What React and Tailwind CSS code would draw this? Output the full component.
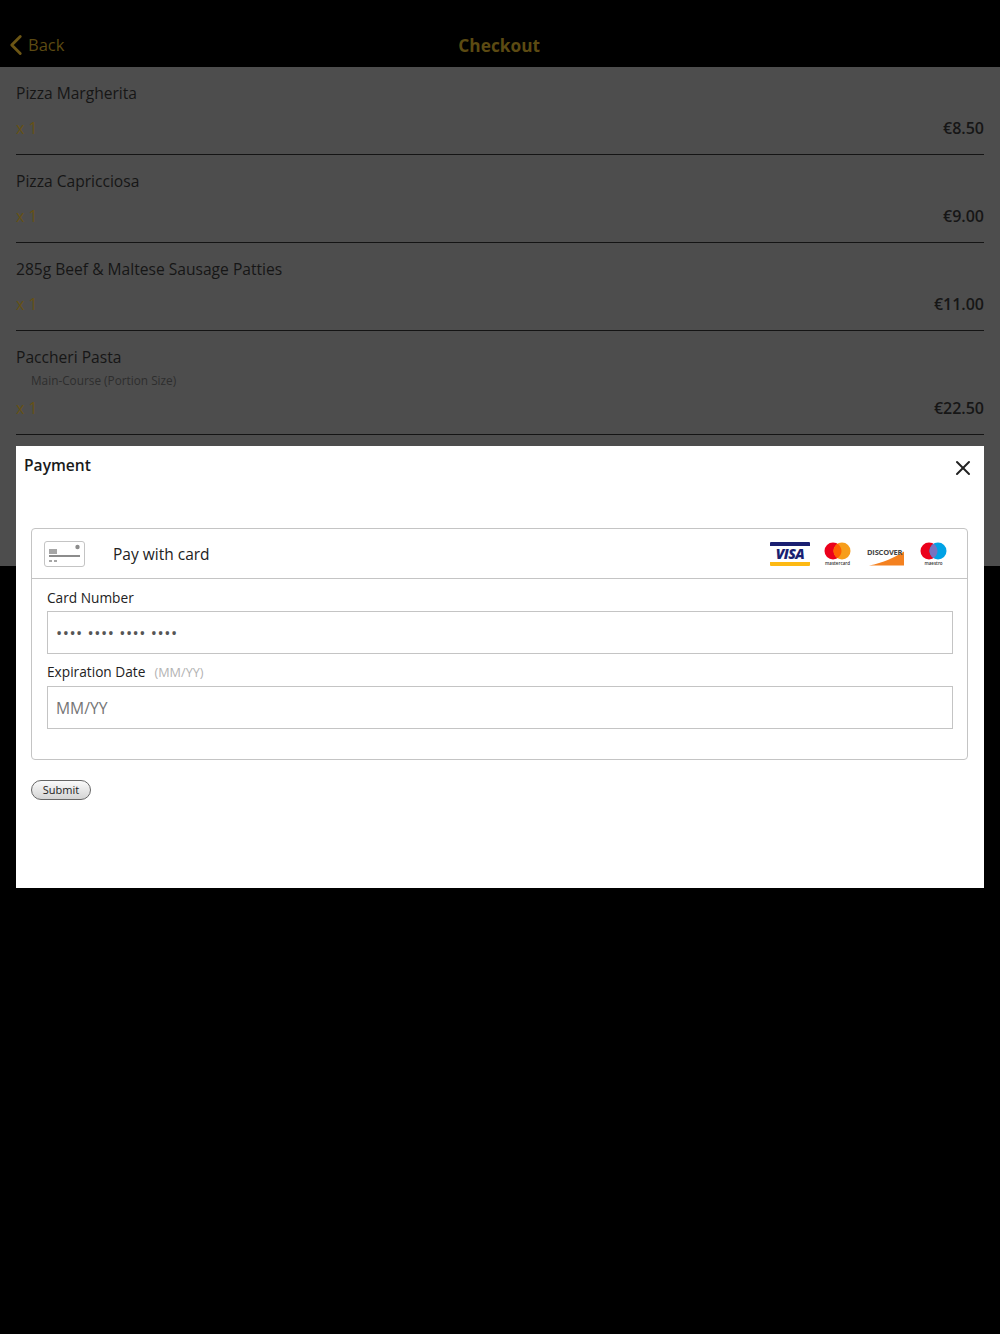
import React from 'react';
import { ChevronLeft, X } from 'lucide-react';

const items = [
  { name: 'Pizza Margherita', price: '€8.50' },
  { name: 'Pizza Capricciosa', price: '€9.00' },
  { name: '285g Beef & Maltese Sausage Patties', price: '€11.00' },
  { name: 'Paccheri Pasta', note: 'Main-Course (Portion Size)', price: '€22.50' },
];

const CardIcon = () => (
  <svg width="42" height="26" viewBox="0 0 42 26" fill="none">
    <rect x="0.5" y="0.5" width="40" height="25" rx="2.5" fill="#fff" stroke="#c4c4c4" />
    <rect x="5" y="8" width="8" height="5" fill="#a6a6a6" />
    <rect x="5" y="14" width="31" height="2" fill="#8c8c8c" />
    <circle cx="33.5" cy="6" r="2.2" fill="#8c8c8c" />
    <rect x="5" y="19" width="3" height="2" fill="#a6a6a6" />
    <rect x="10" y="19" width="3" height="2" fill="#a6a6a6" />
  </svg>
);

const VisaLogo = () => (
  <div className="flex flex-col w-[40px] h-[24px]">
    <div className="h-[4px] bg-[#1a1f71] rounded-t-[1px]" />
    <div className="flex-1 flex items-center justify-center text-[14px] tracking-[-0.6px] leading-none font-extrabold italic text-[#1a1f71]">VISA</div>
    <div className="h-[4px] bg-[#fdb913] rounded-b-[1px]" />
  </div>
);

const McLogo = () => (
  <div className="flex flex-col items-center w-[27px] mt-px -ml-px mr-px">
    <svg width="27" height="18" viewBox="0 0 27 18">
      <circle cx="9" cy="9" r="8.5" fill="#eb001b" />
      <circle cx="18" cy="9" r="8.5" fill="#f79e1b" />
      <path d="M13.5 1.8a8.5 8.5 0 0 1 0 14.4a8.5 8.5 0 0 1 0-14.4z" fill="#ff5f00" />
    </svg>
    <span className="text-[4.5px] leading-[6px] font-semibold text-[#333]">mastercard</span>
  </div>
);

const DiscoverLogo = () => (
  <div className="relative w-[38px] h-[24px]">
    <svg className="absolute left-0 top-0" width="38" height="24" viewBox="0 0 38 24">
      <path d="M2 23.5C16 21 28 15 37 9.5V23.5z" fill="#f48120" />
    </svg>
    <span className="absolute left-0 top-[6px] text-[7.5px] leading-[9px] font-bold tracking-[-0.2px] text-[#444]">DISCOVER</span>
  </div>
);

const MaestroLogo = () => (
  <div className="flex flex-col items-center w-[27px] mt-px">
    <svg width="27" height="18" viewBox="0 0 27 18">
      <circle cx="9" cy="9" r="8.5" fill="#eb001b" />
      <circle cx="18" cy="9" r="8.5" fill="#00a2e5" />
      <path d="M13.5 1.8a8.5 8.5 0 0 1 0 14.4a8.5 8.5 0 0 1 0-14.4z" fill="#7673c0" />
    </svg>
    <span className="text-[4.5px] leading-[6px] font-semibold text-[#333]">maestro</span>
  </div>
);

export default function App() {
  return (
    <div className="relative min-h-[1334px] bg-black font-['Open_Sans',sans-serif]">
      {/* Header */}
      <div className="h-[67px] flex items-end pb-[10px] relative">
        <div className="flex items-center text-[16.5px] leading-[24px] text-[#5c4a12]">
          <ChevronLeft size={34} strokeWidth={2} className="text-[#6b5514] -my-[5px] -ml-[1px]" />
          <span className="ml-[-5px]">Back</span>
        </div>
        <div className="flex-1 text-center text-[17.3px] leading-[22px] font-bold text-[#5c4a12] pr-[66px]">Checkout</div>
      </div>

      {/* Order list */}
      <div className="h-[499px] bg-[#4d4d4d] px-4 overflow-hidden">
        {items.map((item) => (
          <div key={item.name} className="border-b border-[#141414] pt-[14px] pb-[14px]">
            <div className="text-[15.6px] leading-[24px] text-[#161616]">{item.name}</div>
            {item.note && (
              <div className="text-[11.8px] leading-[16px] text-[#2e2e2e] pl-[15px] mt-[3px] -mb-[3px]">{item.note}</div>
            )}
            <div className="flex justify-between items-center mt-[11px] text-[16px] leading-[24px]">
              <span className="text-[#665214]">x 1</span>
              <span className="font-semibold text-[#161616]">{item.price}</span>
            </div>
          </div>
        ))}
      </div>

      {/* Payment modal */}
      <div className="absolute left-4 top-[446px] w-[968px] h-[442px] bg-white">
        <div className="flex justify-between items-start pl-2 pr-[9px] pt-[7px]">
          <span className="text-[15.6px] leading-[24px] font-semibold text-[#1a1a1a]">Payment</span>
          <X size={24} strokeWidth={2} className="text-[#222] mt-[3px]" />
        </div>

        <div className="ml-[15px] mr-[16px] mt-[48px] h-[232px] border border-[#c4c4c4] rounded-[4px]">
          <div className="h-[50px] flex items-center border-b border-[#c4c4c4] pl-3 pr-5">
            <CardIcon />
            <span className="ml-[27px] pt-[2px] text-[15.5px] text-[#222]">Pay with card</span>
            <div className="ml-auto flex items-center gap-[15px]">
              <VisaLogo />
              <McLogo />
              <DiscoverLogo />
              <MaestroLogo />
            </div>
          </div>

          <div className="pl-[15px] pr-[14px]">
            <label className="block mt-[9px] mb-[4px] text-[13.7px] leading-[19px] text-[#222]">Card Number</label>
            <div className="h-[43px] border border-[#c4c4c4] flex items-center pl-[8px] pt-[2px] text-[16.5px] text-[#555] tracking-[0.5px]">•••• •••• •••• ••••</div>
            <label className="block mt-[8px] mb-[4px] text-[13.7px] leading-[19px] text-[#222]">
              Expiration Date
              <span className="ml-[9px] text-[12.7px] text-[#b3b3b3]">(MM/YY)</span>
            </label>
            <div className="h-[43px] border border-[#c4c4c4] flex items-center pl-2 pt-[2px] text-[15.7px] text-[#757575]">MM/YY</div>
          </div>
        </div>

        <button className="block ml-[15px] mt-[20px] w-[60px] h-5 rounded-full border border-[#666] bg-gradient-to-b from-[#fafafa] to-[#d4d4d4] text-[11px] leading-[18px] text-[#222]">
          Submit
        </button>
      </div>
    </div>
  );
}
